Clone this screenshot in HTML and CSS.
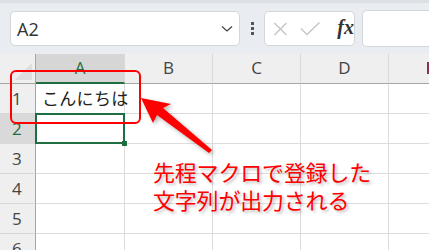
FILE: index.html
```html
<!DOCTYPE html>
<html lang="ja">

<head>
    <meta charset="UTF-8">
    <meta name="viewport" content="width=device-width, initial-scale=1.0">
    <title>Excel</title>
    <link rel="stylesheet" href="styles.css">
</head>

<body>

    <div class="app">
        <!-- 数式バー -->
        <div class="toolbar">
            <div class="name-box">
                <span class="name-text">A2</span>
                <svg class="chevron" width="12" height="8" viewBox="0 0 12 8">
                    <path d="M1 1.5 L6 6 L11 1.5" fill="none" stroke="#444" stroke-width="1.3" />
                </svg>
            </div>
            <div class="dots">
                <span></span><span></span><span></span>
            </div>
            <div class="fx-box">
                <svg width="16" height="16" viewBox="0 0 16 16">
                    <path d="M1.5 1.5 L14.5 14.5 M14.5 1.5 L1.5 14.5" stroke="#c4c4c4" stroke-width="1.4" fill="none" />
                </svg>
                <svg width="22" height="16" viewBox="0 0 22 16">
                    <path d="M1 7.5 L7.5 14 L21 1" stroke="#c4c4c4" stroke-width="1.4" fill="none" />
                </svg>
                <span class="fx">fx</span>
            </div>
            <div class="formula-box"></div>
        </div>

        <!-- シート -->
        <div class="sheet">
            <div class="corner"><span class="tri"></span></div>
            <div class="col-head active">A</div>
            <div class="col-head">B</div>
            <div class="col-head">C</div>
            <div class="col-head">D</div>
            <div class="col-head last"><span class="e-mark"></span></div>

            <div class="row-head">1</div>
            <div class="cell"><span class="value">こんにちは</span></div>
            <div class="cell"></div><div class="cell"></div><div class="cell"></div><div class="cell last"></div>

            <div class="row-head active">2</div>
            <div class="cell selected"></div>
            <div class="cell"></div><div class="cell"></div><div class="cell"></div><div class="cell last"></div>

            <div class="row-head">3</div>
            <div class="cell"></div><div class="cell"></div><div class="cell"></div><div class="cell"></div><div class="cell last"></div>

            <div class="row-head">4</div>
            <div class="cell"></div><div class="cell"></div><div class="cell"></div><div class="cell"></div><div class="cell last"></div>

            <div class="row-head">5</div>
            <div class="cell"></div><div class="cell"></div><div class="cell"></div><div class="cell"></div><div class="cell last"></div>

            <div class="row-head">6</div>
            <div class="cell"></div><div class="cell"></div><div class="cell"></div><div class="cell"></div><div class="cell last"></div>
        </div>

        <!-- 注釈 -->
        <div class="mark-box"></div>
        <svg class="arrow" width="90" height="70" viewBox="0 0 90 70">
            <polygon points="1,1 31,7 23,11 72,53 69,56 17,18 13,26" fill="#ff0000" />
        </svg>
        <p class="note">先程マクロで登録した<br>文字列が出力される</p>
    </div>

</body>

</html>
```

FILE: styles.css
```css
body {
    margin: 0;
    font-family: "Liberation Sans", Arial, "Noto Sans CJK JP", sans-serif;
    background-color: #ffffff;
}

.app {
    position: relative;
    width: 429px;
    height: 250px;
    overflow: hidden;
}

.toolbar {
    display: flex;
    align-items: center;
    height: 54px;
    padding: 0 0 0 10px;
    box-sizing: border-box;
    background-color: #e9ecf0;
    border-top: 3px solid #dcdfe4;
}

.name-box {
    display: flex;
    align-items: center;
    justify-content: space-between;
    width: 230px;
    height: 35px;
    box-sizing: border-box;
    padding: 0 6px 0 6px;
    background-color: #ffffff;
    border: 1px solid #d3d6da;
    border-radius: 5px;
}

.name-text {
    font-family: "Open Sans", "Liberation Sans", sans-serif;
    font-size: 18px;
    color: #333333;
}

.chevron {
    margin-top: 1px;
}

.dots {
    display: flex;
    flex-direction: column;
    gap: 2px;
    margin: 0 10px 0 11px;
}

.dots span {
    width: 3px;
    height: 3px;
    background-color: #555555;
}

.fx-box {
    display: flex;
    align-items: center;
    width: 91px;
    height: 35px;
    box-sizing: border-box;
    padding: 0 0 0 8px;
    gap: 12px;
    background-color: #ffffff;
    border: 1px solid #d3d6da;
    border-radius: 5px;
}

.fx {
    font-family: "Liberation Serif", "Times New Roman", serif;
    font-style: italic;
    font-weight: bold;
    font-size: 20px;
    color: #333333;
    margin-left: 5px;
    margin-bottom: 2px;
}

.formula-box {
    flex: 1;
    height: 35px;
    margin-left: 7px;
    background-color: #ffffff;
    border: 1px solid #d3d6da;
    border-right: none;
    border-radius: 5px 0 0 5px;
}

.sheet {
    display: grid;
    grid-template-columns: 36px 89px 88px 88px 88px 40px;
    grid-template-rows: 30px repeat(6, 30px);
}

.corner,
.col-head,
.row-head {
    box-sizing: border-box;
    background-color: #efefef;
    color: #444444;
    font-family: "Open Sans", "Liberation Sans", sans-serif;
    font-size: 17px;
    display: flex;
    align-items: center;
    justify-content: center;
}

.corner {
    position: relative;
    border-right: 1px solid #a6a6a6;
    border-bottom: 1px solid #a6a6a6;
}

.corner .tri {
    position: absolute;
    right: 3px;
    bottom: 3px;
    width: 0;
    height: 0;
    border-left: 17px solid transparent;
    border-bottom: 17px solid #dedede;
}

.col-head {
    border-right: 1px solid #d8d8d8;
    border-bottom: 1px solid #a6a6a6;
    padding-bottom: 2px;
}

.col-head.active {
    background-color: #d6d6d6;
    color: #1e6e42;
    border-bottom: 2px solid #1e6e42;
    padding-bottom: 1px;
}

.col-head.last {
    border-right: none;
    justify-content: flex-end;
}

.e-mark {
    width: 2px;
    height: 12px;
    background-color: #8a3048;
}

.row-head {
    border-right: 1px solid #a6a6a6;
    border-bottom: 1px solid #d8d8d8;
    justify-content: flex-start;
    padding-left: 12px;
}

.row-head.active {
    background-color: #d9d9d9;
    color: #1e6e42;
}

.cell {
    position: relative;
    box-sizing: border-box;
    border-right: 1px solid #dcdcdc;
    border-bottom: 1px solid #dcdcdc;
}

.cell.last {
    border-right: none;
}

.value {
    position: absolute;
    left: 6px;
    top: 2px;
    font-family: "Noto Sans CJK JP", sans-serif;
    font-size: 17px;
    line-height: 24px;
    letter-spacing: 0.3px;
    color: #222222;
    white-space: nowrap;
    z-index: 2;
}

.cell.selected::after {
    content: "";
    position: absolute;
    left: -1px;
    top: -1px;
    right: -1px;
    bottom: -1px;
    border: 2px solid #1e6e42;
}

.cell.selected::before {
    content: "";
    position: absolute;
    right: -3px;
    bottom: -3px;
    width: 5px;
    height: 5px;
    background-color: #1e6e42;
    z-index: 1;
}

/* 注釈 */
.mark-box {
    position: absolute;
    left: 10px;
    top: 70px;
    width: 131px;
    height: 54px;
    box-sizing: border-box;
    border: 2px solid #ff0000;
    border-radius: 6px;
    z-index: 3;
}

.arrow {
    position: absolute;
    left: 140px;
    top: 97px;
    z-index: 3;
    filter: drop-shadow(2px 2px 2px rgba(0, 0, 0, 0.3));
}

.note {
    position: absolute;
    left: 153px;
    top: 157px;
    margin: 0;
    font-family: "Noto Sans CJK JP", sans-serif;
    font-size: 22px;
    line-height: 28px;
    letter-spacing: -0.2px;
    color: #ff0000;
    text-shadow: 2px 2px 3px rgba(0, 0, 0, 0.25);
    z-index: 3;
}
```
